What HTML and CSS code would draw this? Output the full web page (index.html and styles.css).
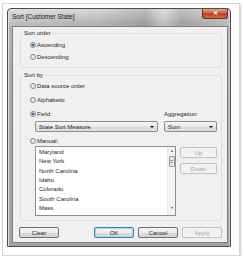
FILE: index.html
```html
<!DOCTYPE html>
<html lang="en">
<head>
    <meta charset="UTF-8">
    <title>Sort [Customer State]</title>
    <link rel="stylesheet" href="styles.css">
</head>
<body>
    <div class="shot">
        <div class="window">
            <div class="titlebar">
                <span class="title">Sort [Customer State]</span>
                <span class="close">✕</span>
            </div>
            <div class="client">
                <fieldset class="group order">
                    <legend>Sort order</legend>
                    <div class="radio-row"><span class="radio checked"></span>Ascending</div>
                    <div class="radio-row"><span class="radio"></span>Descending</div>
                </fieldset>

                <fieldset class="group sortby">
                    <legend>Sort by</legend>
                    <div class="radio-row tall"><span class="radio"></span>Data source order</div>
                    <div class="radio-row tall"><span class="radio"></span>Alphabetic</div>
                    <div class="field-grid">
                        <div class="radio-row tall"><span class="radio checked"></span>Field:</div>
                        <div class="agg-label">Aggregation:</div>
                        <div class="select wide">State Sort Measure<span class="arrow"></span></div>
                        <div class="select">Sum<span class="arrow"></span></div>
                    </div>
                    <div class="radio-row manual"><span class="radio"></span>Manual:</div>
                    <div class="list-row">
                        <div class="listbox">
                            <ul class="items">
                                <li>Maryland</li>
                                <li>New York</li>
                                <li>North Carolina</li>
                                <li>Idaho</li>
                                <li>Colorado</li>
                                <li>South Carolina</li>
                                <li>Mass</li>
                            </ul>
                            <div class="scrollbar">
                                <span class="sb-up"></span>
                                <span class="sb-thumb"></span>
                                <span class="sb-down"></span>
                            </div>
                        </div>
                        <div class="side-buttons">
                            <button class="btn" disabled>Up</button>
                            <button class="btn" disabled>Down</button>
                        </div>
                    </div>
                </fieldset>

                <div class="footer">
                    <button class="btn">Clear</button>
                    <div class="right-buttons">
                        <button class="btn default">OK</button>
                        <button class="btn">Cancel</button>
                        <button class="btn" disabled>Apply</button>
                    </div>
                </div>
            </div>
        </div>
    </div>
</body>
</html>
```

FILE: styles.css
```css
* {
    box-sizing: border-box;
}
body {
    margin: 0;
    background: #fff;
    font-family: "Liberation Sans", Arial, sans-serif;
    font-size: 6px;
    color: #262626;
}
.shot {
    width: 238px;
    height: 253px;
    margin: 3px 0 0 2px;
    padding: 4px 0 0 4px;
    border: 1px solid #d4d4d4;
    box-shadow: 1px 1px 2px rgba(0, 0, 0, 0.2);
}
.window {
    width: 224px;
    height: 239px;
    display: flex;
    flex-direction: column;
    padding: 0 2px 3px 4px;
    border: 1px solid #4c4c4c;
    border-radius: 4px 4px 1px 1px;
    background: linear-gradient(180deg, #d9d9d9 0%, #b4b4b4 6%, #a9a9a9 40%, #a2a2a2 100%);
    box-shadow: inset 1px 0 0 #e0e0e0, inset -1px 0 0 #cfcfcf;
}
.titlebar {
    height: 17px;
    margin: 0 -2px 0 -4px;
    padding: 0 2px 0 4px;
    display: flex;
    justify-content: space-between;
    background: linear-gradient(90deg, rgba(255, 255, 255, 0.15) 0%, rgba(255, 255, 255, 0) 40%, rgba(0, 0, 0, 0.12) 62%, rgba(255, 255, 255, 0.2) 70%, rgba(0, 0, 0, 0.1) 78%, rgba(255, 255, 255, 0.1) 100%);
}
.title {
    font-size: 6.5px;
    line-height: 15px;
    color: #1a1a1a;
}
.close {
    width: 26px;
    height: 10px;
    border: 1px solid #6d2a1c;
    border-top: none;
    border-radius: 0 0 3px 3px;
    background: linear-gradient(180deg, #e8a08a 0%, #d4603f 45%, #bb3b1f 55%, #d5704f 100%);
    color: #fff;
    font-size: 6px;
    font-weight: bold;
    line-height: 9px;
    text-align: center;
}
.client {
    flex: 1;
    padding: 2px 5px 0 7px;
    background: #f0f0f0;
    border: 1px solid #7e7e7e;
}
.group {
    margin: 0;
    padding: 2px 4px 4px 1px;
    min-width: 0;
    border: 1px solid #d5dfe5;
    border-radius: 3px;
}
.group legend {
    padding: 0 2px;
    line-height: 8px;
}
.sortby {
    margin-top: 3px;
    padding-top: 0;
}
.radio-row {
    height: 12px;
    margin-left: 8px;
    display: flex;
    align-items: center;
    gap: 1px;
}
.radio-row.tall {
    height: 14px;
}
.radio-row.manual {
    height: 10px;
    margin-top: 4px;
}
.radio {
    width: 6px;
    height: 6px;
    border-radius: 50%;
    border: 1px solid #8a8a8a;
    background: radial-gradient(circle, #f4f4f4 0%, #dcdcdc 100%);
    flex: none;
    position: relative;
}
.radio.checked::after {
    content: "";
    position: absolute;
    left: 1px;
    top: 1px;
    width: 2px;
    height: 2px;
    border-radius: 50%;
    background: #1e5fa8;
    box-shadow: 0 0 0 0.5px #5b9bd8;
}
.field-grid {
    display: grid;
    grid-template-columns: 136px 53px;
    column-gap: 6px;
    align-items: center;
}
.agg-label {
    line-height: 14px;
}
.select {
    height: 11px;
    display: flex;
    align-items: center;
    justify-content: space-between;
    padding: 0 3px;
    border: 1px solid #8c8c8c;
    border-radius: 2px;
    background: linear-gradient(180deg, #f6f6f6 0%, #e8e8e8 50%, #d9d9d9 51%, #e2e2e2 100%);
}
.select.wide {
    margin-left: 13px;
}
.arrow {
    width: 0;
    height: 0;
    border-left: 2px solid transparent;
    border-right: 2px solid transparent;
    border-top: 2px solid #111;
}
.list-row {
    display: flex;
    gap: 4px;
    margin-left: 13px;
}
.listbox {
    width: 141px;
    height: 70px;
    display: flex;
    border: 1px solid #8b9097;
    background: #fff;
}
.items {
    flex: 1;
    list-style: none;
    margin: 0;
    padding: 1px 0 0 3px;
    line-height: 9.33px;
    overflow: hidden;
}
.scrollbar {
    width: 8px;
    display: flex;
    flex-direction: column;
    align-items: center;
    background: #f3f3f3;
    border-left: 1px solid #e6e6e6;
}
.sb-up,
.sb-down {
    width: 0;
    height: 0;
    border-left: 1.5px solid transparent;
    border-right: 1.5px solid transparent;
}
.sb-up {
    margin-top: 3px;
    border-bottom: 2px solid #444;
}
.sb-down {
    margin-top: auto;
    margin-bottom: 6px;
    border-top: 2px solid #444;
}
.sb-thumb {
    width: 6px;
    height: 11px;
    margin-top: 4px;
    border: 1px solid #9a9a9a;
    border-radius: 1px;
    background: repeating-linear-gradient(180deg, #e4e4e4 0, #e4e4e4 1px, #9a9a9a 1px, #9a9a9a 2px) center / 3px 5px no-repeat, #e9e9e9;
}
.side-buttons {
    display: flex;
    flex-direction: column;
    gap: 5px;
    padding-top: 1px;
}
.btn {
    width: 37px;
    height: 11px;
    padding: 0;
    font-family: inherit;
    font-size: 6px;
    color: #262626;
    border: 1px solid #707070;
    border-radius: 2px;
    background: linear-gradient(180deg, #f4f4f4 0%, #ebebeb 50%, #dcdcdc 51%, #d4d4d4 100%);
}
.btn:disabled {
    color: #a3a3a3;
    border-color: #c2c2c2;
    background: #f2f2f2;
}
.btn.default {
    border-color: #3c7fb1;
    box-shadow: inset 0 0 0 1px #a9d8f4;
}
.footer {
    margin-top: 6px;
    margin-left: -1px;
    display: flex;
    justify-content: space-between;
}
.footer .btn {
    width: 40px;
}
.right-buttons {
    display: flex;
    gap: 4px;
}
```
